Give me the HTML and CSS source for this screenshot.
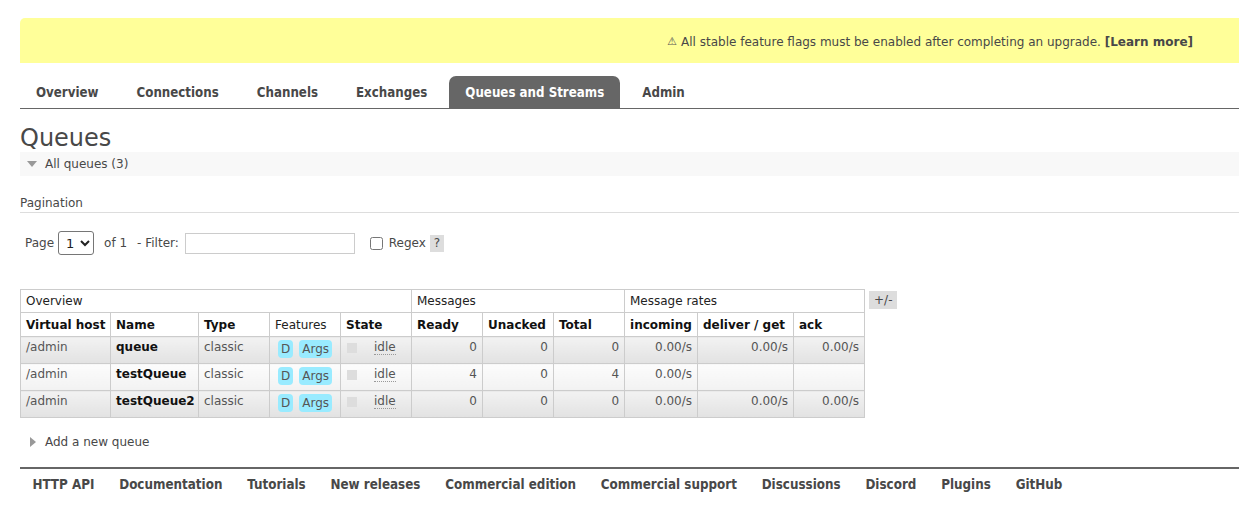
FILE: index.html
```html
<!DOCTYPE html>
<html>
<head>
<meta charset="utf-8">
<title>RabbitMQ Management</title>
<link rel="stylesheet" href="styles.css">
</head>
<body>
<div class="page">
  <div class="banner">
    <span class="warn">⚠</span> All stable feature flags must be enabled after completing an upgrade. <a class="learn">[Learn more]</a>
  </div>

  <ul class="tabs">
    <li class="tab">Overview</li>
    <li class="tab">Connections</li>
    <li class="tab">Channels</li>
    <li class="tab">Exchanges</li>
    <li class="tab active">Queues and Streams</li>
    <li class="tab">Admin</li>
  </ul>

  <h1 class="title">Queues</h1>

  <div class="section-head open"><span class="tri-down"></span>All queues (3)</div>
  <div class="section-body">
    <h3 class="pag-title">Pagination</h3>
    <div class="pager">
      <span class="lbl">Page</span>
      <select class="page-select"><option>1</option></select>
      <span class="lbl of">of 1</span>
      <span class="lbl">- Filter:</span>
      <input class="filter" type="text">
      <input class="regex-box" type="checkbox">
      <span class="lbl">Regex</span>
      <span class="help">?</span>
    </div>

    <div class="table-wrap">
      <table class="queues">
        <colgroup>
          <col class="c-vh"><col class="c-name"><col class="c-type"><col class="c-feat"><col class="c-state">
          <col class="c-num"><col class="c-num"><col class="c-num">
          <col class="c-inc"><col class="c-del"><col class="c-ack">
        </colgroup>
        <thead>
          <tr class="group-row">
            <th colspan="5">Overview</th>
            <th colspan="3">Messages</th>
            <th colspan="3">Message rates</th>
          </tr>
          <tr class="col-row">
            <th>Virtual host</th>
            <th>Name</th>
            <th>Type</th>
            <th class="plain">Features</th>
            <th>State</th>
            <th>Ready</th>
            <th>Unacked</th>
            <th>Total</th>
            <th>incoming</th>
            <th>deliver / get</th>
            <th>ack</th>
          </tr>
        </thead>
        <tbody>
          <tr class="alt1">
            <td>/admin</td>
            <td class="qname">queue</td>
            <td>classic</td>
            <td><span class="badge">D</span><span class="badge">Args</span></td>
            <td><span class="state-sq"></span><abbr class="idle">idle</abbr></td>
            <td class="r">0</td>
            <td class="r">0</td>
            <td class="r">0</td>
            <td class="r">0.00/s</td>
            <td class="r">0.00/s</td>
            <td class="r">0.00/s</td>
          </tr>
          <tr class="alt2">
            <td>/admin</td>
            <td class="qname">testQueue</td>
            <td>classic</td>
            <td><span class="badge">D</span><span class="badge">Args</span></td>
            <td><span class="state-sq"></span><abbr class="idle">idle</abbr></td>
            <td class="r">4</td>
            <td class="r">0</td>
            <td class="r">4</td>
            <td class="r">0.00/s</td>
            <td class="r"></td>
            <td class="r"></td>
          </tr>
          <tr class="alt1">
            <td>/admin</td>
            <td class="qname">testQueue2</td>
            <td>classic</td>
            <td><span class="badge">D</span><span class="badge">Args</span></td>
            <td><span class="state-sq"></span><abbr class="idle">idle</abbr></td>
            <td class="r">0</td>
            <td class="r">0</td>
            <td class="r">0</td>
            <td class="r">0.00/s</td>
            <td class="r">0.00/s</td>
            <td class="r">0.00/s</td>
          </tr>
        </tbody>
      </table>
      <span class="plusminus">+/-</span>
    </div>
  </div>

  <div class="section-head closed"><span class="tri-right"></span>Add a new queue</div>

  <ul class="footer">
    <li>HTTP API</li>
    <li>Documentation</li>
    <li>Tutorials</li>
    <li>New releases</li>
    <li>Commercial edition</li>
    <li>Commercial support</li>
    <li>Discussions</li>
    <li>Discord</li>
    <li>Plugins</li>
    <li>GitHub</li>
  </ul>
</div>
</body>
</html>
```

FILE: styles.css
```css
* { box-sizing: border-box; }
html, body { margin: 0; padding: 0; background: #fff; }
body {
  font-family: "DejaVu Sans", Verdana, sans-serif;
  font-size: 12px;
  color: #484848;
}
.page { padding: 18px 0 0 20px; }

.banner {
  background: #ffff99;
  border-top-left-radius: 5px;
  height: 45px;
  display: flex;
  align-items: center;
  justify-content: flex-end;
  padding-right: 46px;
  padding-top: 2px;
  font-size: 12px;
  color: #484848;
  white-space: pre;
}
.banner .warn { font-size: 11px; color: #555; }
.banner .learn { font-weight: bold; color: #484848; }

.tabs {
  list-style: none;
  margin: 13px 0 0 0;
  padding: 0;
  display: flex;
  gap: 6px;
  border-bottom: 1px solid #666;
  height: 33px;
}
.tab {
  font-family: "DejaVu Sans Condensed", "DejaVu Sans", sans-serif;
  font-weight: bold;
  font-size: 13.2px;
  color: #484848;
  height: 32px;
  line-height: 33px;
  padding: 0 16px;
  border-radius: 7px 7px 0 0;
}
.tab.active { background: #666; color: #fff; }

.title {
  font-size: 24px;
  font-weight: normal;
  color: #484848;
  margin: 13px 0 0 0;
  padding-top: 2px;
  line-height: 28px;
  height: 30px;
}

.section-head {
  height: 24px;
  line-height: 25px;
  padding-left: 25px;
  position: relative;
  color: #484848;
}
.section-head.open { background: #f8f8f8; }
.tri-down {
  position: absolute;
  left: 7px;
  top: 9px;
  width: 0; height: 0;
  border-left: 5px solid transparent;
  border-right: 5px solid transparent;
  border-top: 6px solid #999;
}
.tri-right {
  position: absolute;
  left: 10px;
  top: 7px;
  width: 0; height: 0;
  border-top: 5px solid transparent;
  border-bottom: 5px solid transparent;
  border-left: 6px solid #999;
}

.section-body { padding: 0 0 12px 0; }
.pag-title {
  margin: 18px 0 0 0;
  font-size: 12px;
  font-weight: normal;
  color: #484848;
  line-height: 16px;
  padding-top: 1px;
  padding-bottom: 1px;
  border-bottom: 1px solid #ddd;
}

.pager {
  display: flex;
  align-items: center;
  margin-top: 18px;
  padding-left: 5px;
  height: 24px;
}
.lbl { color: #484848; }
.page-select {
  width: 36px;
  height: 24px;
  margin: 0 10px 0 4px;
  font-family: "DejaVu Sans", sans-serif;
  font-size: 13px;
  color: #222;
  border: 1px solid #767676;
  border-radius: 3px;
  background: #fff;
  padding: 0 0 0 3px;
}
.of { margin-right: 10px; }
.filter {
  width: 170px;
  height: 21px;
  margin-left: 6px;
  border: 1px solid #ccc;
  background: #fff;
  padding: 0;
}
.regex-box {
  width: 13px;
  height: 13px;
  margin: 0 6px 0 15px;
}
.help {
  background: #ddd;
  color: #484848;
  margin-left: 4px;
  padding: 0 4px;
  height: 17px;
  line-height: 17px;
}

.table-wrap {
  display: flex;
  align-items: flex-start;
  margin-top: 34px;
}
.queues {
  border-collapse: collapse;
  table-layout: fixed;
  width: 845px;
  border: 1px solid #ccc;
}
.queues th, .queues td {
  border: 1px solid #ccc;
  text-align: left;
  white-space: nowrap;
}
.group-row th {
  font-weight: normal;
  color: #222;
  height: 23px;
  padding: 0 5px;
}
.col-row th {
  font-weight: bold;
  color: #111;
  height: 24px;
  padding: 0 5px;
}
.col-row th.plain { font-weight: normal; color: #222; }
.c-vh { width: 90px; }
.c-name { width: 88px; }
.c-type { width: 71px; }
.c-feat { width: 71px; }
.c-state { width: 71px; }
.c-num { width: 71px; }
.c-inc { width: 73px; }
.c-del { width: 96px; }
.c-ack { width: 71px; }

.queues td {
  height: 27px;
  vertical-align: top;
  padding: 3px 5px 0 5px;
  color: #555;
}
.queues td.r { text-align: right; }
.queues td.qname { font-weight: bold; color: #111; }
tr.alt1 td { background: linear-gradient(#f2f2f2, #e2e2e2); }
tr.alt2 td { background: linear-gradient(#fcfcfc, #f2f2f2); }

.badge {
  display: inline-block;
  background: #99ebff;
  color: #555;
  border-radius: 4px;
  padding: 0 3px;
  height: 18px;
  line-height: 18px;
  margin: 0 6px 0 3px;
  vertical-align: top;
}
.badge + .badge { margin-left: 0; }
.state-sq {
  display: inline-block;
  width: 10px;
  height: 10px;
  background: #ddd;
  vertical-align: top;
  margin: 3px 0 0 1px;
}
.idle {
  display: inline-block;
  margin-left: 17px;
  text-decoration: none;
  border-bottom: 1px dotted #999;
  line-height: 14px;
  color: #555;
}

.plusminus {
  background: #ddd;
  color: #484848;
  margin: 2px 0 0 4px;
  padding: 0 5px;
  height: 18px;
  line-height: 18px;
}

.section-head.closed { margin-top: 0; }

.footer {
  list-style: none;
  margin: 13px 0 0 0;
  padding: 6px 0 0 0;
  border-top: 2px solid #666;
  display: flex;
}
.footer li {
  font-family: "DejaVu Sans Condensed", "DejaVu Sans", sans-serif;
  font-weight: bold;
  font-size: 13.3px;
  color: #484848;
  padding: 0 12.4px;
  line-height: 20px;
}
```
